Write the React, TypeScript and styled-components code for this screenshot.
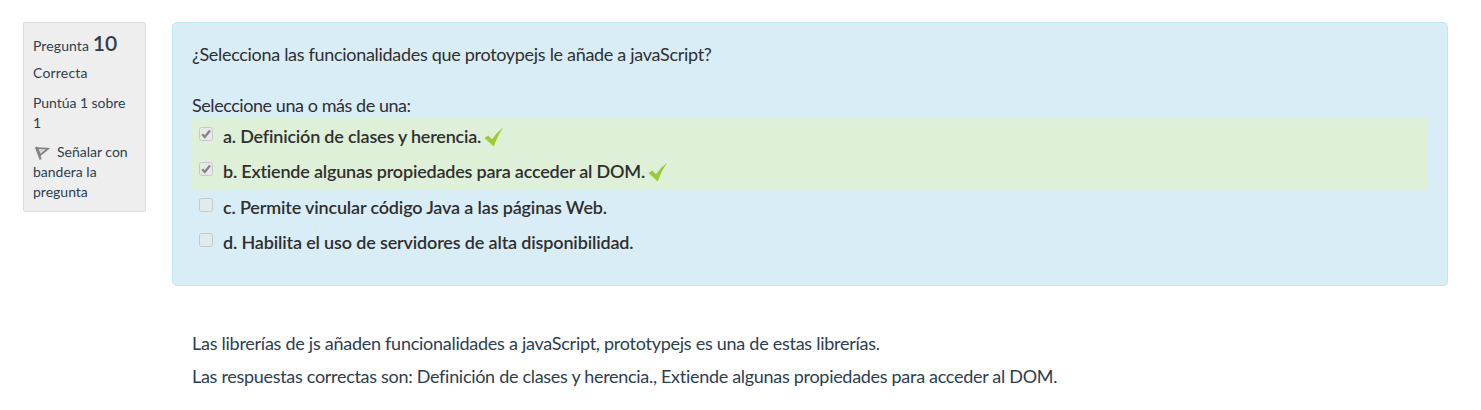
import React from 'react';
import styled, { createGlobalStyle } from 'styled-components';

const GlobalStyle = createGlobalStyle`
  * { box-sizing: border-box; }
  body {
    margin: 0;
    background: #fff;
    color: #2c3e50;
    font-family: Lato, "Liberation Sans", sans-serif;
    font-size: 18px;
    line-height: 25px;
  }
  p { margin: 0; }
`;

const Question = styled.main`
  display: flex;
  align-items: flex-start;
  gap: 26px;
  padding: 22px 33px 0 23px;
`;

const Info = styled.aside`
  flex: none;
  width: 123px;
  height: 190px;
  padding: 7px 9px;
  background: #eee;
  border: 1px solid #dcdcdc;
  border-radius: 2px;
  font-size: 14px;
  line-height: 20px;
`;

const Heading = styled.h3`
  margin: 0;
  height: 25px;
  font-size: 14px;
  font-weight: 400;
  line-height: 25px;
  letter-spacing: 0.1px;
`;

const Number = styled.span`
  font-size: 21px;
  font-weight: 600;
`;

const InfoLine = styled.div<{ $gap: number; $spacing?: number }>`
  margin-top: ${({ $gap }) => $gap}px;
  letter-spacing: ${({ $spacing = 0 }) => $spacing}px;
`;

const Flag = styled.svg`
  width: 16px;
  height: 16px;
  margin: 0 7px 0 1px;
  vertical-align: -4px;
`;

const Content = styled.div`
  flex: 1;
  min-width: 0;
`;

const Formulation = styled.section`
  height: 264px;
  padding: 19px 19px 0;
  background: #d9edf7;
  border: 1px solid #bce8f1;
  border-radius: 5px;
  color: #2f2f2f;
  letter-spacing: -0.305px;
`;

const Prompt = styled.p`
  margin-top: 26px;
  letter-spacing: -0.44px;
`;

const Answers = styled.div`
  display: flex;
  flex-direction: column;
`;

const Answer = styled.label<{ $correct?: boolean; $height: number }>`
  display: flex;
  align-items: flex-start;
  height: ${({ $height }) => $height}px;
  padding: 6px 7px 0;
  background: ${({ $correct }) => ($correct ? '#dff0d8' : 'transparent')};
  font-weight: 600;
  letter-spacing: ${({ $correct }) => ($correct ? -0.2 : -0.155)}px;
`;

const Box = styled.svg`
  flex: none;
  width: 14px;
  height: 14px;
  margin: 3px 10px 0 0;
`;

const Tick = styled.svg`
  flex: none;
  width: 20px;
  height: 20px;
  margin: 3px 0 0 3px;
`;

const Feedback = styled.section`
  display: flex;
  flex-direction: column;
  gap: 8px;
  padding: 45px 20px 0;
  letter-spacing: -0.3px;

  p:first-child { letter-spacing: -0.265px; }
`;

const Checkbox = ({ checked }: { checked?: boolean }) => (
  <Box viewBox="0 0 14 14" role="img" aria-label={checked ? 'Marcada' : 'Sin marcar'}>
    <rect x="0.5" y="0.5" width="13" height="13" rx="2" fill="#e6e9e7" fillOpacity={checked ? 1 : 0.65} stroke="#c3cacb" />
    {checked && <path d="M3.2 7.2 5.8 10 11 3.5" fill="none" stroke="#858585" strokeWidth="2.3" />}
  </Box>
);

const answers = [
  { text: 'a. Definición de clases y herencia.', correct: true, height: 35 },
  { text: 'b. Extiende algunas propiedades para acceder al DOM.', correct: true, height: 36 },
  { text: 'c. Permite vincular código Java a las páginas Web.', correct: false, height: 35 },
  { text: 'd. Habilita el uso de servidores de alta disponibilidad.', correct: false, height: 35 },
];

export default function App() {
  return (
    <>
      <GlobalStyle />
      <Question>
        <Info>
          <Heading>Pregunta <Number>10</Number></Heading>
          <InfoLine $gap={8} $spacing={0.2}>Correcta</InfoLine>
          <InfoLine $gap={10} $spacing={-0.05}>Puntúa 1 sobre 1</InfoLine>
          <InfoLine $gap={9}>
            <Flag viewBox="0 0 16 16" aria-hidden="true">
              <path d="M2 2 6.7 14.5" fill="none" stroke="#858585" strokeWidth="2.2" />
              <path d="M3.3 3 14.2 3.7 6.2 10.2Z" fill="#d6d6d6" stroke="#808080" strokeWidth="1.7" />
            </Flag>
            Señalar con bandera la pregunta
          </InfoLine>
        </Info>
        <Content>
          <Formulation>
            <p>¿Selecciona las funcionalidades que protoypejs le añade a javaScript?</p>
            <Prompt>Seleccione una o más de una:</Prompt>
            <Answers>
              {answers.map(({ text, correct, height }) => (
                <Answer key={text} $correct={correct} $height={height}>
                  <Checkbox checked={correct} />
                  <span>{text}</span>
                  {correct && (
                    <Tick viewBox="0 0 20 20" role="img" aria-label="Correcta">
                      <path d="M0.5 11 4.3 8.6 8 12.3Q12 6 19.2 0.6 13.2 9 9.7 19.4Z" fill="#9acd32" />
                    </Tick>
                  )}
                </Answer>
              ))}
            </Answers>
          </Formulation>
          <Feedback>
            <p>Las librerías de js añaden funcionalidades a javaScript, prototypejs es una de estas librerías.</p>
            <p>Las respuestas correctas son: Definición de clases y herencia., Extiende algunas propiedades para acceder al DOM.</p>
          </Feedback>
        </Content>
      </Question>
    </>
  );
}
